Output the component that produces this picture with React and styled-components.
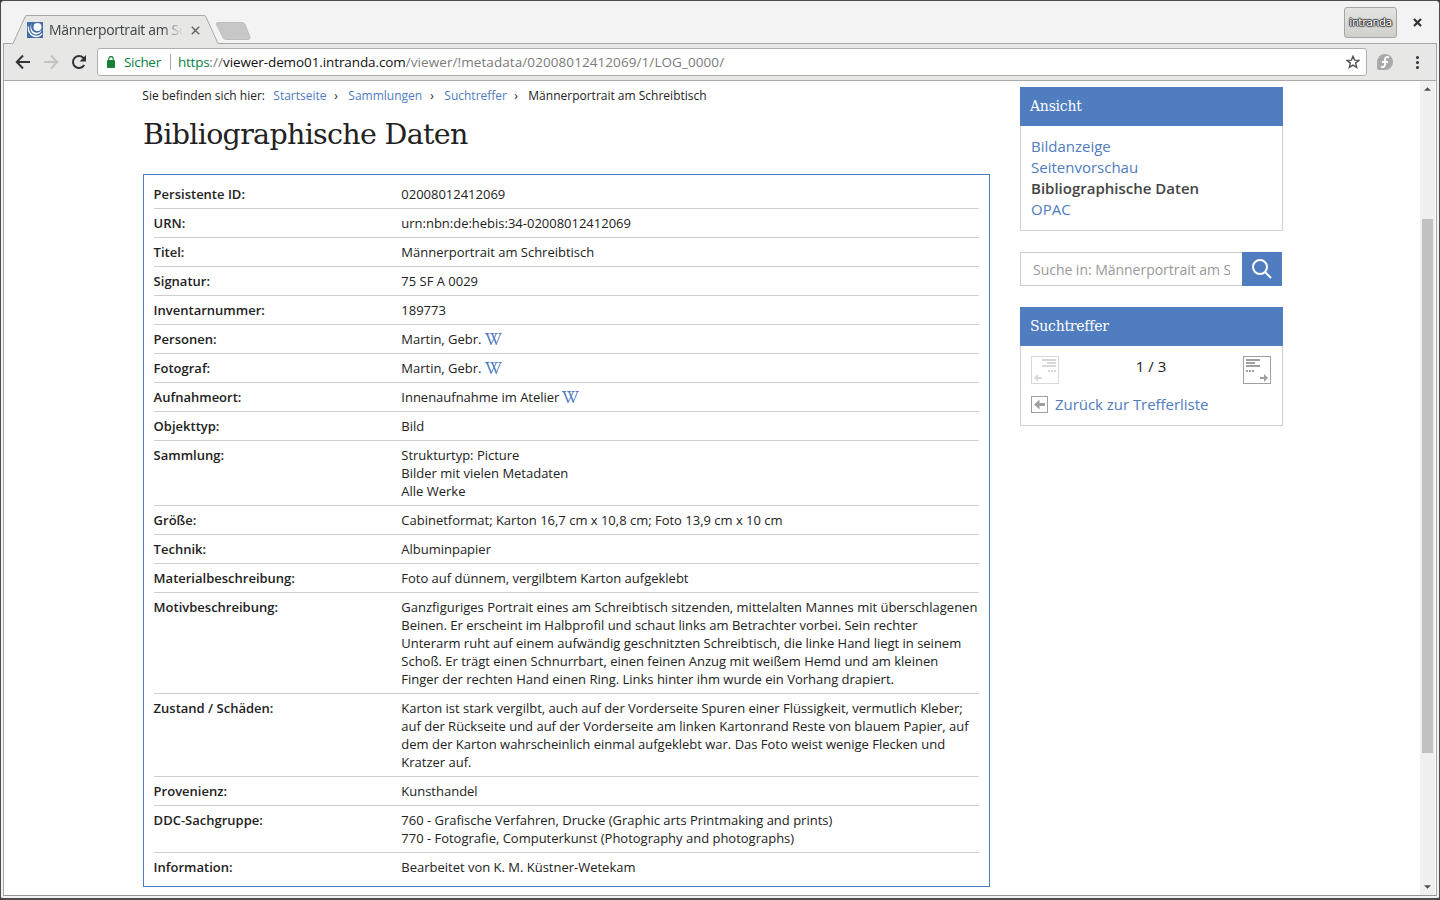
import React from 'react';
import styled, { createGlobalStyle } from 'styled-components';
import { FaWikipediaW } from 'react-icons/fa';

const blue = '#507cc0';
const sans = '"Open Sans", "Noto Sans", sans-serif';
const serif = '"DejaVu Serif", serif';

const GlobalStyle = createGlobalStyle`
  *, *::before, *::after { box-sizing: border-box; }
  body { margin: 0; overflow: hidden; background: #3c3638; font-family: ${sans}; }
`;

const Window = styled.div`
  width: 1440px;
  height: 900px;
  display: flex;
  flex-direction: column;
  border: 1px solid #4f4a4c;
  border-width: 1px 1px 2px 1px;
  border-radius: 4px 4px 3px 3px;
  background: #f3f3f3;
  overflow: hidden;
`;

const TitleBar = styled.div`
  height: 42px;
  display: flex;
  align-items: flex-end;
  justify-content: space-between;
  flex: none;
`;

const TabStrip = styled.div`
  position: relative;
  width: 260px;
  height: 43px;
  margin-bottom: -1px;
  z-index: 1;
`;

const TabShape = styled.svg`
  position: absolute;
  inset: 0;
`;

const TabContent = styled.div`
  position: absolute;
  left: 26px;
  top: 19px;
  height: 20px;
  display: flex;
  align-items: center;
`;

const TabTitle = styled.span`
  width: 134px;
  margin-left: 6px;
  overflow: hidden;
  white-space: nowrap;
  font-size: 14px;
  line-height: 20px;
  letter-spacing: -0.35px;
  color: #3f4446;
  mask-image: linear-gradient(to right, #000 114px, transparent 134px);
`;

const TabClose = styled.svg`
  margin-left: 8px;
`;

const WindowControls = styled.div`
  display: flex;
  align-items: center;
  height: 36px;
  margin: 0 17px 2px 0;
  gap: 16px;
`;

const WindowClose = styled.svg`
  margin-bottom: 2px;
`;

const ProfileButton = styled.div`
  width: 53px;
  height: 31px;
  margin-bottom: 1px;
  display: flex;
  align-items: center;
  justify-content: center;
  border: 1px solid #a5a5a2;
  border-radius: 3px;
  background: linear-gradient(#e4e4e2, #cfcfcc);
  font-family: "DejaVu Sans", sans-serif;
  font-size: 11px;
  letter-spacing: -0.5px;
  color: #fff;
  text-shadow: 0 0 1px #333, 1px 0 1px #333, -1px 0 1px #333, 0 1px 1px #333, 0 -1px 1px #333;
`;

const Frame = styled.div`
  flex: 1;
  min-height: 0;
  display: flex;
  flex-direction: column;
  margin: 0 2px 2px 2px;
  border: 1px solid #a7a7a7;
  border-bottom-color: #969696;
`;

const Toolbar = styled.div`
  height: 37px;
  flex: none;
  display: flex;
  align-items: center;
  padding-left: 11px;
  background: #e7e7e5;
  border-bottom: 1px solid #a9a9a9;
`;

const NavIcon = styled.svg`
  width: 16px;
  height: 16px;
  flex: none;
  margin-right: ${(p) => p.$gap || 12}px;
`;

const ExtensionIcon = styled.svg`
  margin-left: 10px;
`;

const MenuIcon = styled.svg`
  margin-left: 22px;
`;

const AddressBar = styled.div`
  width: 1270px;
  height: 28px;
  display: flex;
  align-items: center;
  padding: 0 6px 0 9px;
  background: #fff;
  border: 1px solid #b0b0ae;
  border-radius: 3px;
  font-size: 13.5px;
  line-height: 26px;
  white-space: nowrap;
`;

const Secure = styled.span`
  width: 38px;
  margin-left: 9px;
  color: #0b8043;
  letter-spacing: -0.3px;
`;

const Separator = styled.span`
  width: 1px;
  height: 16px;
  margin: 0 7px 0 8px;
  background: #a9a9a9;
`;

const Url = styled.span`
  flex: 1;
  color: #7b7b7b;
  letter-spacing: 0.08px;
`;

const UrlPart = styled.span`
  color: ${(p) => p.$color};
  letter-spacing: ${(p) => p.$ls}px;
`;

const Viewport = styled.div`
  flex: 1;
  min-height: 0;
  display: flex;
  padding-left: 1px;
  padding-right: 1px;
  background: #fff;
`;

const Page = styled.main`
  flex: 1;
  display: flex;
  align-items: flex-start;
  padding: 6px 0 0 138px;
`;

const Content = styled.section`
  width: 847px;
  margin-right: 30px;
`;

const Breadcrumb = styled.nav`
  height: 18px;
  display: flex;
  margin-left: -0.7px;
  font-size: 12px;
  line-height: 18px;
  white-space: nowrap;
  color: #222;
`;

const Crumb = styled.span`
  width: ${(p) => p.$w}px;
  color: ${(p) => (p.$link ? blue : '#222')};
`;

const PageTitle = styled.h1`
  height: 40px;
  margin: 9px 0 20px;
  font: 400 28.5px/42px ${serif};
  letter-spacing: -0.68px;
  white-space: nowrap;
  color: #222;
`;

const MetadataBox = styled.div`
  padding: 5px 10px;
  border: 1px solid ${blue};
`;

const MetadataRow = styled.div`
  display: flex;
  padding: 5px 0;
  border-bottom: 1px solid #cfcfcf;
  font-size: 13px;
  line-height: 18px;
  color: #222;
  &:last-child { border-bottom: 0; }
`;

const Label = styled.div`
  width: 247.3px;
  margin-left: -0.4px;
  margin-right: 0.4px;
  font-weight: 600;
`;

const Value = styled.div`
  white-space: nowrap;
  letter-spacing: -0.008px;
`;

const Line = styled.div`
  height: 18px;
  display: flex;
  align-items: center;
`;

const WikiIcon = styled(FaWikipediaW)`
  width: 17px;
  height: 12px;
  margin-left: 3px;
  color: ${blue};
  stroke: ${blue};
  stroke-width: 8px;
`;

const Sidebar = styled.aside`
  width: 263px;
`;

const Widget = styled.section`
  margin-bottom: 21px;
`;

const WidgetTitle = styled.h2`
  height: 39px;
  margin: 0;
  padding-left: 10px;
  background: ${blue};
  color: #fff;
  font: 400 14px/38px ${serif};
  letter-spacing: -0.25px;
`;

const WidgetBody = styled.div`
  height: ${(p) => p.$h}px;
  padding: 10px;
  border: 1px solid #d2d2d2;
  border-top: 0;
  font-size: 15px;
  line-height: 21px;
`;

const ViewLink = styled.div`
  color: ${(p) => (p.$active ? '#444' : blue)};
  font-weight: ${(p) => (p.$active ? 600 : 400)};
`;

const SearchForm = styled.div`
  display: flex;
  height: 34px;
  margin-bottom: 21px;
`;

const SearchField = styled.div`
  width: 222px;
  padding: 0 12px;
  border: 1px solid #ccc;
  border-right: 0;
  color: #999;
  font-size: 14px;
  line-height: 33px;
`;

const Placeholder = styled.div`
  overflow: hidden;
  white-space: nowrap;
  letter-spacing: -0.03px;
`;

const SearchButton = styled.div`
  width: 40px;
  display: flex;
  align-items: center;
  justify-content: center;
  background: ${blue};
`;

const HitNavigation = styled.div`
  display: flex;
  justify-content: space-between;
  height: 40px;
  padding-right: 1px;
  color: #222;
`;

const BackLink = styled.div`
  display: flex;
  align-items: center;
  height: 17px;
  gap: 7px;
  color: ${blue};
  letter-spacing: -0.04px;
`;

const Scrollbar = styled.div`
  width: 15px;
  display: flex;
  flex-direction: column;
  align-items: center;
  background: #f0f0f0;
`;

const ScrollArrow = styled.svg`
  width: 7px;
  height: 4px;
  margin: ${(p) => (p.$down ? '132px 0 0' : '6px 0 128px')};
`;

const Thumb = styled.div`
  width: 11px;
  height: 534px;
  background: #c1c1c1;
`;

const records = [
  ['Persistente ID:', ['02008012412069']],
  ['URN:', ['urn:nbn:de:hebis:34-02008012412069']],
  ['Titel:', ['Männerportrait am Schreibtisch']],
  ['Signatur:', ['75 SF A 0029']],
  ['Inventarnummer:', ['189773']],
  ['Personen:', ['Martin, Gebr.'], true],
  ['Fotograf:', ['Martin, Gebr.'], true],
  ['Aufnahmeort:', ['Innenaufnahme im Atelier'], true],
  ['Objekttyp:', ['Bild']],
  ['Sammlung:', ['Strukturtyp: Picture', 'Bilder mit vielen Metadaten', 'Alle Werke']],
  ['Größe:', ['Cabinetformat; Karton 16,7 cm x 10,8 cm; Foto 13,9 cm x 10 cm']],
  ['Technik:', ['Albuminpapier']],
  ['Materialbeschreibung:', ['Foto auf dünnem, vergilbtem Karton aufgeklebt']],
  ['Motivbeschreibung:', [
    'Ganzfiguriges Portrait eines am Schreibtisch sitzenden, mittelalten Mannes mit überschlagenen',
    'Beinen. Er erscheint im Halbprofil und schaut links am Betrachter vorbei. Sein rechter',
    'Unterarm ruht auf einem aufwändig geschnitzten Schreibtisch, die linke Hand liegt in seinem',
    'Schoß. Er trägt einen Schnurrbart, einen feinen Anzug mit weißem Hemd und am kleinen',
    'Finger der rechten Hand einen Ring. Links hinter ihm wurde ein Vorhang drapiert.',
  ]],
  ['Zustand / Schäden:', [
    'Karton ist stark vergilbt, auch auf der Vorderseite Spuren einer Flüssigkeit, vermutlich Kleber;',
    'auf der Rückseite und auf der Vorderseite am linken Kartonrand Reste von blauem Papier, auf',
    'dem der Karton wahrscheinlich einmal aufgeklebt war. Das Foto weist wenige Flecken und',
    'Kratzer auf.',
  ]],
  ['Provenienz:', ['Kunsthandel']],
  ['DDC-Sachgruppe:', [
    '760 - Grafische Verfahren, Drucke (Graphic arts Printmaking and prints)',
    '770 - Fotografie, Computerkunst (Photography and photographs)',
  ]],
  ['Information:', ['Bearbeitet von K. M. Küstner-Wetekam']],
];

const Favicon = () => (
  <svg width="16" height="16" viewBox="0 0 16 16">
    <rect width="16" height="16" fill="#456fa8" />
    <circle cx="10.500" cy="5" r="4" fill="#fff" />
    <path d="M4.500 1.500C3 7 6 10.800 9.500 10.800c2.500 0 4-1 5.200-3C14 11 12 12.400 9.300 12.400 4.500 12.400 1.800 7 4.500 1.500Z" fill="#fff" />
    <path d="M1.300 4.500C.8 10 4.500 14.500 9.500 14.500c2.500 0 4.200-1 5.500-2.800" fill="none" stroke="#fff" strokeWidth="1.300" />
  </svg>
);

const PreviousHit = () => (
  <svg width="28" height="28" viewBox="0 0 28 28" fill="#d8d8d8">
    <rect x=".5" y=".5" width="27" height="27" fill="none" stroke="#d8d8d8" />
    <path d="M11 3h14v2H11zM16 6h9v2h-9zM11 9h14v2H11zM17 14h2v2h-2zM20 14h2v2h-2zM23 14h2v2h-2zM3 22L7 18v3h4v2H7V26z" />
  </svg>
);

const NextHit = () => (
  <svg width="28" height="28" viewBox="0 0 28 28" fill="#a0a0a0">
    <rect x=".5" y=".5" width="27" height="27" fill="none" stroke="#a0a0a0" />
    <path d="M3 3h14v2H3zM3 6h9v2H3zM3 9h14v2H3zM3 14h2v2H3zM6 14h2v2H6zM9 14h2v2H9zM25 22L21 18v3h-4v2h4V26z" />
  </svg>
);

export default function App() {
  return (
    <>
      <GlobalStyle />
      <Window>
        <TitleBar>
          <TabStrip>
            <TabShape width="260" height="43" viewBox="0 0 260 43">
              <path d="M0 42.500H12L24 16Q24.500 14.500 26 14.500H203Q204.500 14.500 205 16L217 42.500H260V43H0Z" fill="#e7e7e5" />
              <path d="M2 42.500H12L24 16Q24.500 14.500 26 14.500H203Q204.500 14.500 205 16L217 42.500H260" fill="none" stroke="#a7a7a7" />
              <path d="M217 21.500H241Q243 21.500 244 23.500L249 36Q249.500 38.500 247 38.500H225Q223 38.500 222 36.500L215.500 23.500Q215 21.500 217 21.500Z" fill="#c7c7c7" stroke="#bdbdbd" />
            </TabShape>
            <TabContent>
              <Favicon />
              <TabTitle>Männerportrait am Schreibtisch</TabTitle>
              <TabClose width="9" height="9" viewBox="0 0 9 9">
                <path d="M.8.8l7.400 7.400M8.200.8L.8 8.200" stroke="#666" strokeWidth="1.500" />
              </TabClose>
            </TabContent>
          </TabStrip>
          <WindowControls>
            <ProfileButton>intranda</ProfileButton>
            <WindowClose width="9" height="9" viewBox="0 0 9 9">
              <path d="M1 1l7 7M8 1L1 8" stroke="#2e3436" strokeWidth="2.200" />
            </WindowClose>
          </WindowControls>
        </TitleBar>
        <Frame>
          <Toolbar>
            <NavIcon viewBox="0 0 16 16" fill="none" stroke="#303437" strokeWidth="2">
              <path d="M15 8H2.500M8 1.500L1.800 8 8 14.500" />
            </NavIcon>
            <NavIcon viewBox="0 0 16 16" fill="none" stroke="#c3c3c1" strokeWidth="2">
              <path d="M1 8h12.500M8 1.500L14.200 8 8 14.500" />
            </NavIcon>
            <NavIcon viewBox="0 0 16 16" $gap={10}>
              <path d="M13.200 11A6 6 0 1 1 12.200 3.700L14 5.500" fill="none" stroke="#303437" strokeWidth="2" />
              <path d="M15 1v6.500H8.500z" fill="#303437" />
            </NavIcon>
            <AddressBar>
              <svg width="8" height="12" viewBox="0 0 9 12" preserveAspectRatio="none">
                <rect y="4" width="9" height="8" rx="1" fill="#1a8037" />
                <path d="M2 5V3a2.500 2.500 0 0 1 5 0v2" fill="none" stroke="#1a8037" strokeWidth="1.300" />
              </svg>
              <Secure>Sicher</Secure>
              <Separator />
              <Url>
                <UrlPart $color="#0b8043" $ls={-0.25}>https</UrlPart>://<UrlPart $color="#111" $ls={-0.1}>viewer-demo01.intranda.com</UrlPart>/viewer/!metadata/02008012412069/1/LOG_0000/
              </Url>
              <svg width="14" height="14" viewBox="0 0 14 14">
                <path d="M7 1.200L8.600 5.100 12.900 5.400 9.600 8.100 10.700 12.400 7 10.100 3.300 12.400 4.400 8.100 1.100 5.400 5.400 5.100Z" fill="none" stroke="#555" strokeWidth="1.400" />
              </svg>
            </AddressBar>
            <ExtensionIcon width="16" height="16" viewBox="0 0 16 16">
              <path d="M8 0a8 8 0 1 1 0 16H2a2 2 0 0 1-2-2V8a8 8 0 0 1 8-8z" fill="#a9a9a9" />
              <path d="M12 3.500C10 2.200 8 3.200 8 5.300V10.500C8 12.800 5.800 13.800 4 12.500M5 8h6" fill="none" stroke="#fff" strokeWidth="1.900" />
            </ExtensionIcon>
            <MenuIcon width="4" height="14" viewBox="0 0 4 14" fill="#303437">
              <circle cx="2.500" cy="2.500" r="1.500" />
              <circle cx="2.500" cy="7.500" r="1.500" />
              <circle cx="2.500" cy="12.500" r="1.500" />
            </MenuIcon>
          </Toolbar>
          <Viewport>
            <Page>
              <Content>
                <Breadcrumb>
                  <Crumb $w={131}>Sie befinden sich hier:</Crumb>
                  <Crumb $w={61} $link>Startseite</Crumb>
                  <Crumb $w={14}>›</Crumb>
                  <Crumb $w={82} $link>Sammlungen</Crumb>
                  <Crumb $w={14}>›</Crumb>
                  <Crumb $w={70} $link>Suchtreffer</Crumb>
                  <Crumb $w={14}>›</Crumb>
                  <Crumb $w={180}>Männerportrait am Schreibtisch</Crumb>
                </Breadcrumb>
                <PageTitle>Bibliographische Daten</PageTitle>
                <MetadataBox>
                  {records.map(([label, lines, wiki]) => (
                    <MetadataRow key={label}>
                      <Label>{label}</Label>
                      <Value>
                        {lines.map((line) => (
                          <Line key={line}>
                            {line}
                            {wiki && <WikiIcon preserveAspectRatio="none" viewBox="0 50 640 412" />}
                          </Line>
                        ))}
                      </Value>
                    </MetadataRow>
                  ))}
                </MetadataBox>
              </Content>
              <Sidebar>
                <Widget>
                  <WidgetTitle>Ansicht</WidgetTitle>
                  <WidgetBody $h={105}>
                    <ViewLink>Bildanzeige</ViewLink>
                    <ViewLink>Seitenvorschau</ViewLink>
                    <ViewLink $active>Bibliographische Daten</ViewLink>
                    <ViewLink>OPAC</ViewLink>
                  </WidgetBody>
                </Widget>
                <SearchForm>
                  <SearchField>
                    <Placeholder>Suche in: Männerportrait am Schreibtisch</Placeholder>
                  </SearchField>
                  <SearchButton>
                    <svg width="20" height="20" viewBox="0 0 20 20" fill="none" stroke="#fff" strokeWidth="2">
                      <circle cx="8" cy="8" r="7" />
                      <path d="M13 13l6 6" />
                    </svg>
                  </SearchButton>
                </SearchForm>
                <Widget>
                  <WidgetTitle>Suchtreffer</WidgetTitle>
                  <WidgetBody $h={80}>
                    <HitNavigation>
                      <PreviousHit />
                      <span>1 / 3</span>
                      <NextHit />
                    </HitNavigation>
                    <BackLink>
                      <svg width="17" height="17" viewBox="0 0 17 17">
                        <rect x=".5" y=".5" width="16" height="16" fill="none" stroke="#a0a0a0" />
                        <path d="M3 8.500L8.500 3.500V7H14v3H8.500v3.500z" fill="#a0a0a0" />
                      </svg>
                      Zurück zur Trefferliste
                    </BackLink>
                  </WidgetBody>
                </Widget>
              </Sidebar>
            </Page>
            <Scrollbar>
              <ScrollArrow viewBox="0 0 8 4"><path d="M0 4L4 0l4 4z" fill="#505050" /></ScrollArrow>
              <Thumb />
              <ScrollArrow $down viewBox="0 0 8 4"><path d="M0 0l4 4 4-4z" fill="#505050" /></ScrollArrow>
            </Scrollbar>
          </Viewport>
        </Frame>
      </Window>
    </>
  );
}
